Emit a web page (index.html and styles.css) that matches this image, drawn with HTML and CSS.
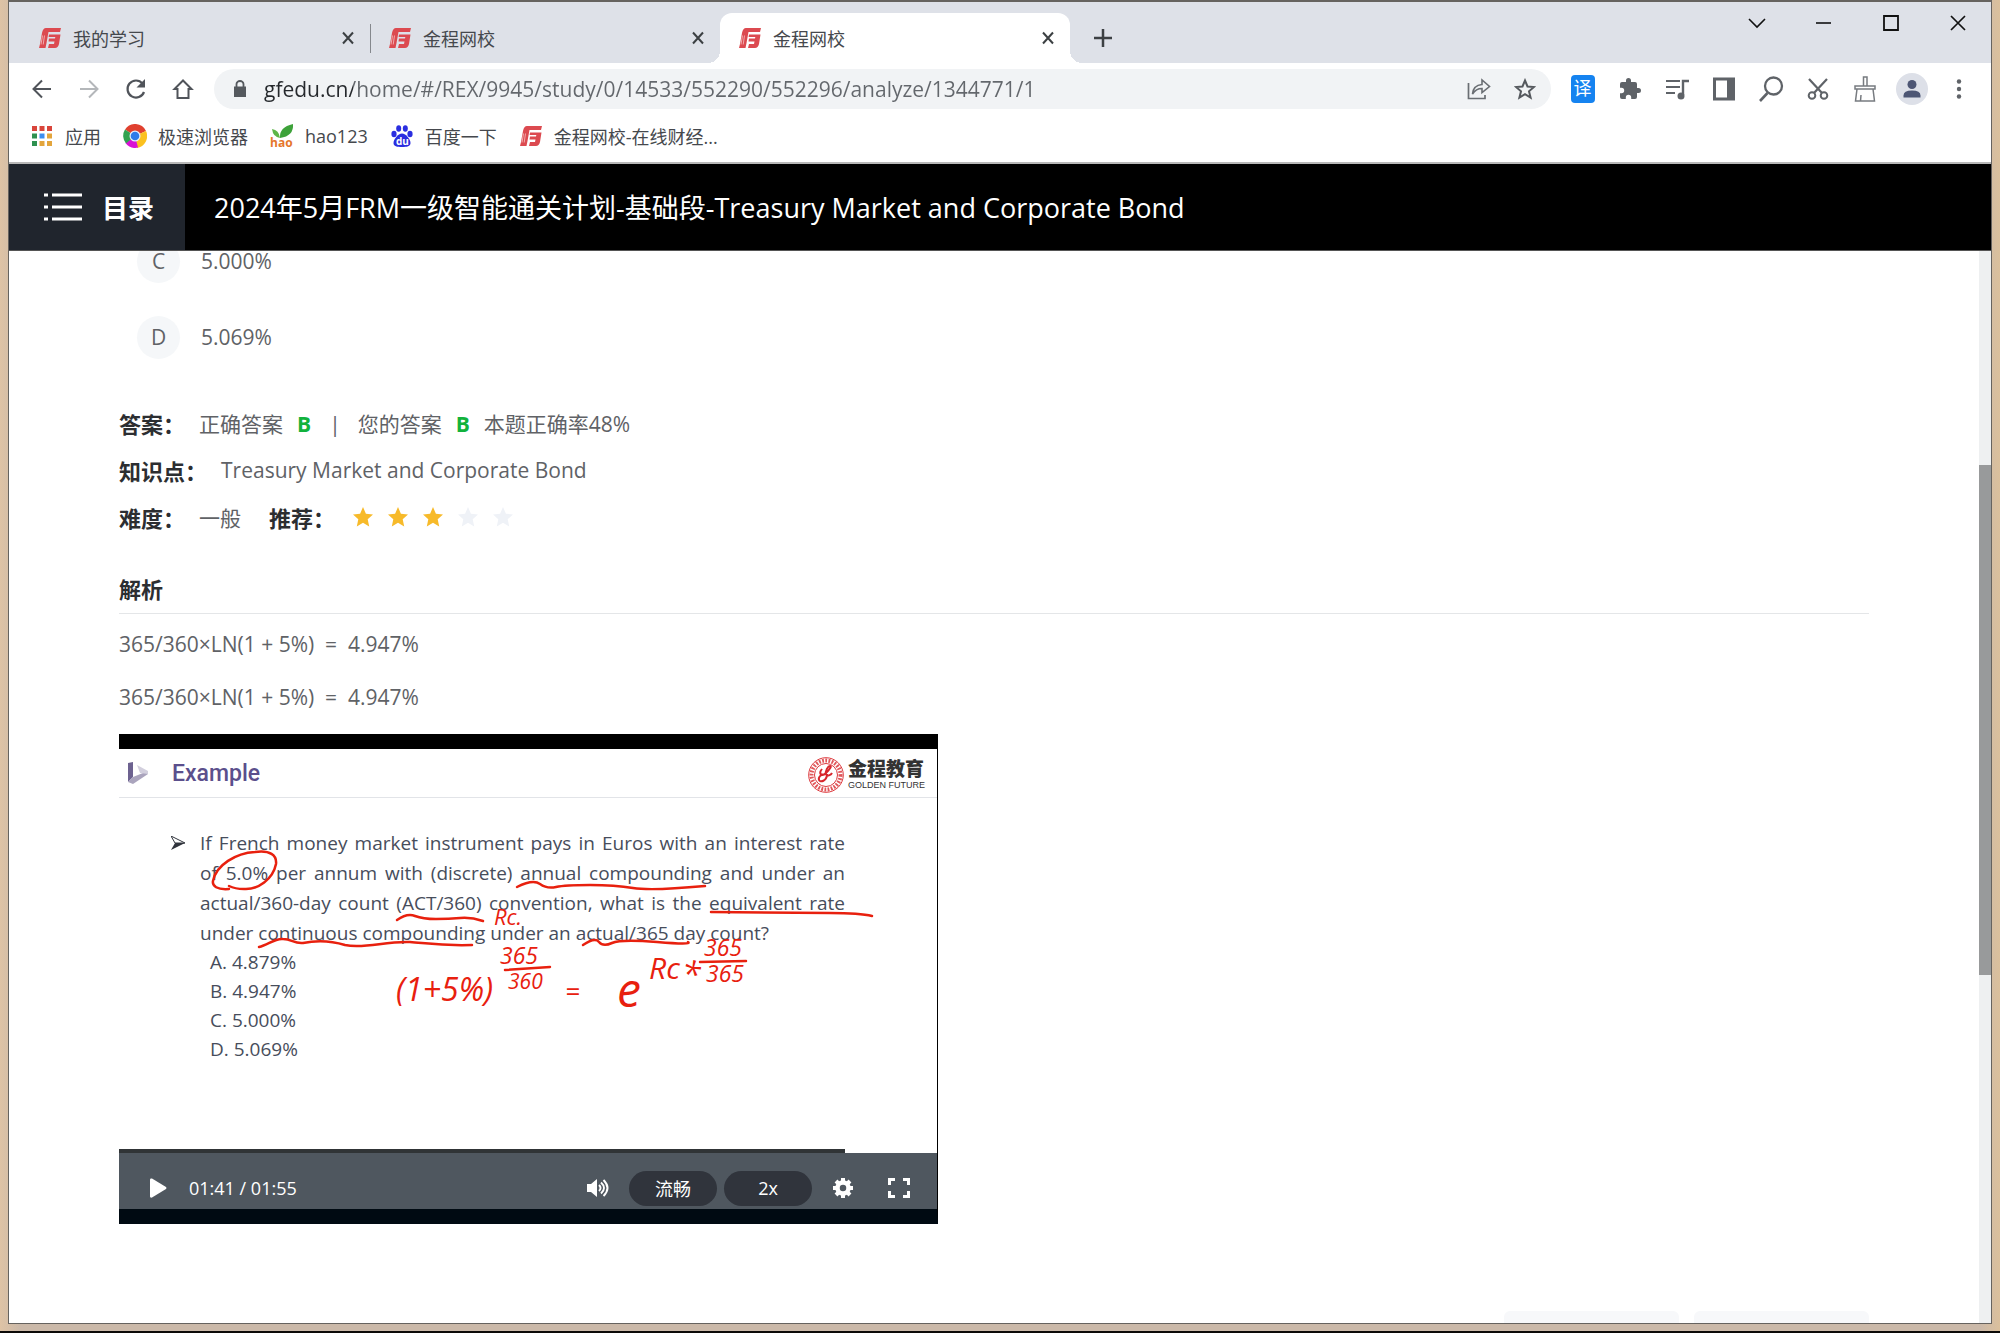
FILE: index.html
```html
<!DOCTYPE html>
<html lang="zh-CN">
<head>
<meta charset="utf-8">
<title>金程网校</title>
<link rel="stylesheet" href="styles.css">
</head>
<body>
<svg class="defs" aria-hidden="true">
  <symbol id="logo" viewBox="0 0 22 20">
    <path d="M7 0h15l-1 4H9.500L7.500 15 6.500 20H0l1-4 2-11Q4 0 7 0z" fill="#dc4a50"/>
    <path d="M10 6.500h11.500L20 16q-1 4-4 4H9l1-4h5l.5-2.500H9.500l.5-3h6l.3-1.500H9.600z" fill="#dc4a50"/>
    <path d="M3.500 7.500 2 16.500M5.500 7.500 4.200 16.500" stroke="#f1aaab" stroke-width="1"/>
  </symbol>
  <symbol id="star" viewBox="0 0 20 20">
    <path d="M10 0l2.900 6.700 7.100.7-5.300 4.800 1.500 7.200L10 15.700l-6.200 3.700 1.500-7.200L0 7.400l7.100-.7z" fill="currentColor"/>
  </symbol>
  <symbol id="close" viewBox="0 0 14 14">
    <path d="M2 1.500l10 11M12 1.500l-10 11" stroke="currentColor" stroke-width="2" fill="none"/>
  </symbol>
</svg>

<div class="window">
  <header class="tabstrip">
    <nav class="tabs" aria-label="标签页">
      <div class="tab">
        <svg class="favicon"><use href="#logo"/></svg><span class="tab-title">我的学习</span>
        <button class="tab-close" aria-label="关闭"><svg><use href="#close"/></svg></button>
      </div>
      <div class="tab tab-divided">
        <svg class="favicon"><use href="#logo"/></svg><span class="tab-title">金程网校</span>
        <button class="tab-close" aria-label="关闭"><svg><use href="#close"/></svg></button>
      </div>
      <div class="tab tab-active">
        <svg class="favicon"><use href="#logo"/></svg><span class="tab-title">金程网校</span>
        <button class="tab-close" aria-label="关闭"><svg><use href="#close"/></svg></button>
      </div>
      <button class="new-tab" aria-label="新标签页"><svg width="18" height="18" viewBox="0 0 18 18"><path d="M9 0v18M0 9h18" stroke="#3c4043" stroke-width="2.500"/></svg></button>
    </nav>
    <div class="window-controls">
      <button aria-label="搜索标签页"><svg width="18" height="18" viewBox="0 0 18 18"><path d="M1 5l8 8 8-8" fill="none" stroke="#111" stroke-width="1.600"/></svg></button>
      <button aria-label="最小化"><svg width="18" height="18" viewBox="0 0 18 18"><path d="M1 9h15" stroke="#111" stroke-width="1.600"/></svg></button>
      <button aria-label="最大化"><svg width="18" height="18" viewBox="0 0 18 18"><path d="M2 2h14v14H2z" fill="none" stroke="#111" stroke-width="1.800"/></svg></button>
      <button aria-label="关闭窗口"><svg width="18" height="18" viewBox="0 0 18 18"><path d="M2 2l14 14M16 2L2 16" stroke="#111" stroke-width="1.700"/></svg></button>
    </div>
  </header>

  <div class="toolbar">
    <div class="nav-buttons">
      <button aria-label="后退"><svg width="22" height="22" viewBox="0 0 22 22"><path d="M20 11H3M11 2.500L2.500 11l8.500 8.500" fill="none" stroke="#50545a" stroke-width="2"/></svg></button>
      <button aria-label="前进"><svg width="22" height="22" viewBox="0 0 22 22"><path d="M2 11h17M11 2.500l8.500 8.500-8.500 8.500" fill="none" stroke="#b4b7ba" stroke-width="2"/></svg></button>
      <button aria-label="重新加载"><svg width="22" height="22" viewBox="0 0 22 22"><path d="M19 14a8.500 8.500 0 1 1-1.500-8.500" fill="none" stroke="#50545a" stroke-width="2.200"/><path d="M20 1v8.500h-8.500z" fill="#50545a"/></svg></button>
      <button aria-label="主页"><svg width="22" height="22" viewBox="0 0 22 22"><path d="M11 2.500L2.500 11H5.500v9h11v-9h3z" fill="none" stroke="#50545a" stroke-width="2"/></svg></button>
    </div>
    <div class="address">
      <svg class="lock" width="14" height="18" viewBox="0 0 14 18"><path d="M1 6.500h12V17H1z" fill="#55595e"/><path d="M3.500 7V4a3.500 3 0 0 1 7 0v3" fill="none" stroke="#55595e" stroke-width="1.800"/></svg>
      <input class="url" type="text" aria-label="地址" value="gfedu.cn/home/#/REX/9945/study/0/14533/552290/552296/analyze/1344771/1">
      <button aria-label="分享"><svg width="24" height="22" viewBox="0 0 24 22"><path d="M1.500 5v15.500H18V17" fill="none" stroke="#6a6e73" stroke-width="1.700"/><path d="M5.500 16C6 9.500 10 7 15 6.500V2l7.500 6.500L15 14.500V10.500C10.500 10.500 8 12 5.500 16z" fill="none" stroke="#6a6e73" stroke-width="1.600"/></svg></button>
      <button aria-label="收藏"><svg width="22" height="22" viewBox="0 0 22 22"><path d="M11 2.500l2.500 6 6.500.5-5 4.300 1.600 6.400-5.600-3.500-5.600 3.500L7 13.300 2 9l6.500-.5z" fill="none" stroke="#55595e" stroke-width="2"/></svg></button>
    </div>
    <div class="extensions">
      <button aria-label="翻译"><span class="translate">译</span></button>
      <button aria-label="扩展程序"><svg width="24" height="24" viewBox="0 0 24 24"><path d="M20.500 11H19V7a2 2 0 0 0-2-2h-4V3.500a2.500 2.500 0 0 0-5 0V5H4a2 2 0 0 0-2 2v3.800h1.500a2.700 2.700 0 0 1 0 5.400H2V20a2 2 0 0 0 2 2h3.800v-1.500a2.700 2.700 0 0 1 5.400 0V22H17a2 2 0 0 0 2-2v-4h1.500a2.500 2.500 0 0 0 0-5z" fill="#5f6368"/></svg></button>
      <button aria-label="媒体"><svg width="24" height="24" viewBox="0 0 24 24"><path d="M1 4h14M1 10h14M1 16h9" stroke="#5f6368" stroke-width="2.200"/><path d="M18 18V4h6" fill="none" stroke="#5f6368" stroke-width="2.400"/><circle cx="16" cy="19" r="3.500" fill="#5f6368"/></svg></button>
      <button aria-label="侧边栏"><svg width="22" height="24" viewBox="0 0 22 24"><path d="M1.500 2h19v20h-19z" fill="none" stroke="#5f6368" stroke-width="3"/><path d="M14 2h7v20h-7z" fill="#5f6368"/></svg></button>
      <button aria-label="搜索"><svg width="26" height="26" viewBox="0 0 26 26"><circle cx="15.500" cy="10" r="8.500" fill="none" stroke="#5f6368" stroke-width="2.300"/><path d="M9.500 17L2 25" stroke="#5f6368" stroke-width="2.600"/></svg></button>
      <button aria-label="截图"><svg width="22" height="24" viewBox="0 0 22 24"><path d="M2 2l13 14M20 2L7 16" stroke="#5f6368" stroke-width="2.200"/><circle cx="5" cy="18.500" r="3.300" fill="none" stroke="#5f6368" stroke-width="2"/><circle cx="17" cy="18.500" r="3.300" fill="none" stroke="#5f6368" stroke-width="2"/></svg></button>
      <button aria-label="清理"><svg width="24" height="26" viewBox="0 0 24 26"><path d="M10.500 10V1h3.500v9M2 10h20v3H2zM4 13L2.500 25h19L20 13M8 19l-.5 6" fill="none" stroke="#777b80" stroke-width="1.500"/></svg></button>
      <button aria-label="用户"><svg width="32" height="32" viewBox="0 0 32 32"><circle cx="16" cy="16" r="16" fill="#dde0e8"/><circle cx="16" cy="11.500" r="4.500" fill="#4d5674"/><path d="M7.500 24.500v-2q0-5 8.500-5t8.500 5v2z" fill="#4d5674"/></svg></button>
      <button aria-label="菜单"><svg width="6" height="20" viewBox="0 0 6 20"><circle cx="3" cy="2.500" r="2.200" fill="#5f6368"/><circle cx="3" cy="10" r="2.200" fill="#5f6368"/><circle cx="3" cy="17.500" r="2.200" fill="#5f6368"/></svg></button>
    </div>
  </div>

  <nav class="bookmarks" aria-label="书签">
    <a href="#"><svg viewBox="0 0 24 24"><path d="M2 2h5v5H2z" fill="#d9453b"/><path d="M9.500 2h5v5h-5z" fill="#d9453b"/><path d="M17 2h5v5h-5z" fill="#d9453b"/><path d="M2 9.500h5v5H2z" fill="#2f9150"/><path d="M9.500 9.500h5v5h-5z" fill="#3c8df0"/><path d="M17 9.500h5v5h-5z" fill="#e3a53c"/><path d="M2 17h5v5H2z" fill="#2f9150"/><path d="M9.500 17h5v5h-5z" fill="#e3a53c"/><path d="M17 17h5v5h-5z" fill="#e3a53c"/></svg>应用</a>
    <a href="#"><svg viewBox="0 0 24 24"><path d="M12 12L2 5.500A12 12 0 0 1 23 7z" fill="#e0402f"/><path d="M12 12l11-5a12 12 0 0 1-9 17z" fill="#fbc11f"/><path d="M12 12l3 11.600A12 12 0 0 1 2.500 19z" fill="#d911d6"/><path d="M12 12l-9 7.500A12 12 0 0 1 2 5.500z" fill="#32a350"/><circle cx="12" cy="12" r="5.500" fill="#e6efff"/><circle cx="12" cy="12" r="4.300" fill="#2f7bea"/></svg>极速浏览器</a>
    <a href="#"><svg viewBox="0 0 24 24"><path d="M10 14Q9 3 23 0q1 12-13 14z" fill="#3da23a"/><path d="M10 14Q9 6 2 5q1 8 8 9z" fill="#5cb548"/><text x="0" y="23" class="hao">hao</text></svg>hao123</a>
    <a href="#"><svg viewBox="0 0 24 24"><g fill="#2a2ee0"><ellipse cx="4" cy="10" rx="2.600" ry="3.300"/><ellipse cx="8.700" cy="4.500" rx="2.500" ry="3.300"/><ellipse cx="15.300" cy="4.500" rx="2.500" ry="3.300"/><ellipse cx="20" cy="10" rx="2.600" ry="3.300"/><path d="M12 9.500c4 0 8.500 6 8.500 9.500S17 23 12 23s-8.500-.5-8.500-4S8 9.500 12 9.500z"/></g><text x="6" y="21" class="du">du</text></svg>百度一下</a>
    <a href="#"><svg viewBox="-1 -2 24 24"><use href="#logo" width="22" height="20"/></svg>金程网校-在线财经...</a>
  </nav>

  <div class="course-bar">
    <button class="catalog"><svg width="38" height="30" viewBox="0 0 38 30"><path d="M0 3h4M0 15h4M0 27h4M8 3h30M8 15h30M8 27h30" stroke="#fff" stroke-width="3"/></svg>目录</button>
    <h1>2024年5月FRM一级智能通关计划-基础段-Treasury Market and Corporate Bond</h1>
  </div>

  <div class="viewport">
    <main class="page">
      <ul class="options">
        <li><span class="letter">C</span>5.000%</li>
        <li><span class="letter">D</span>5.069%</li>
      </ul>
      <dl class="facts">
        <div><dt>答案：</dt><dd>正确答案<b>B</b><i class="bar">|</i>您的答案<b>B</b>本题正确率48%</dd></div>
        <div><dt>知识点：</dt><dd>Treasury Market and Corporate Bond</dd></div>
        <div><dt>难度：</dt><dd>一般</dd><dt>推荐：</dt>
          <dd class="stars" aria-label="3 / 5"><svg><use href="#star"/></svg><svg><use href="#star"/></svg><svg><use href="#star"/></svg><svg class="off"><use href="#star"/></svg><svg class="off"><use href="#star"/></svg></dd></div>
      </dl>
      <h2>解析</h2>
      <p class="formula">365/360×LN(1 + 5%)&nbsp; =&nbsp; 4.947%</p>
      <p class="formula">365/360×LN(1 + 5%)&nbsp; =&nbsp; 4.947%</p>

      <section class="player" aria-label="视频解析">
        <div class="slide">
          <div class="slide-head">
            <svg width="20" height="22" viewBox="0 0 20 22"><path d="M0 1l5-1v15l-5 5z" fill="#6d6290"/><path d="M0 20l5-5 5-2 10-4v3L5 22z" fill="#aaa4bd"/><path d="M9 3l11 6v3l-8-1z" fill="#d2cfdd"/></svg>
            <h3>Example</h3>
            <div class="brand">
              <svg width="36" height="36" viewBox="0 0 36 36"><circle cx="18" cy="18" r="14.500" fill="none" stroke="#e0575a" stroke-width="4" stroke-dasharray="1.800 1.400"/><circle cx="18" cy="18" r="17.300" fill="none" stroke="#dd3a3e" stroke-width="1"/><circle cx="18" cy="18" r="11.500" fill="#fff" stroke="#dd3a3e" stroke-width="1"/><path d="M14 12c-4 5 0 8 4 4s6-7 4-7-5 5-4 8 5 1 6-1M18 17c-5 0-8 3-7 6s8 1 8-6" fill="none" stroke="#d7262c" stroke-width="2"/></svg>
              <div class="brand-name"><strong>金程教育</strong><small>GOLDEN FUTURE</small></div>
            </div>
          </div>
          <div class="question">
            <svg class="bullet" width="14" height="14" viewBox="0 0 14 14"><path d="M0 0l14 7H4z" fill="none" stroke="#30343c" stroke-width="1"/><path d="M4 7h10L0 14z" fill="#30343c"/></svg>
            <div class="question-text">
              <p>If French money market instrument pays in Euros with an interest rate</p>
              <p>of 5.0% per annum with (discrete) annual compounding and under an</p>
              <p>actual/360-day count (ACT/360) convention, what is the equivalent rate</p>
              <p class="last">under continuous compounding under an actual/365 day count?</p>
              <ul><li>A. 4.879%</li><li>B. 4.947%</li><li>C. 5.000%</li><li>D. 5.069%</li></ul>
            </div>
          </div>
          <svg class="ink" viewBox="119 750 818 400">
            <g fill="none" stroke="#e8200e" stroke-width="2.500" stroke-linecap="round">
              <path d="M229 890C217 891 212 887 213 882C216 866 236 854 255 853C270 851 277 856 276 865C273 880 258 891 244 890Q235 890 229 887"/>
              <path d="M517 888Q533 880 540 885T556 888T590 886T633 889T705 887"/>
              <path d="M711 913Q800 914 830 914T872 917"/>
              <path d="M397 921Q407 914 415 917T436 920T460 919T483 922"/>
              <path d="M259 948C268 946 275 939 283 940C292 940 294 945 303 944C317 941 332 942 345 946C365 950 385 942 410 943C425 944 440 947 472 946"/>
              <path d="M583 946Q595 938 599 943T612 944T657 943T688 943"/>
              <path d="M505 971L550 968M700 963L746 962"/>
            </g>
            <g class="ink-text">
              <text x="494" y="926" font-size="22">Rc.</text>
              <text x="500" y="965" font-size="23">365</text>
              <text x="508" y="990" font-size="21">360</text>
              <text x="396" y="1002" font-size="32">(1+5%)</text>
              <text x="565" y="1002" font-size="26">=</text>
              <text x="617" y="1008" font-size="48">e</text>
              <text x="649" y="980" font-size="30">Rc</text>
              <text x="682" y="988" font-size="34">*</text>
              <text x="704" y="957" font-size="23">365</text>
              <text x="706" y="983" font-size="23">365</text>
            </g>
          </svg>
        </div>
        <input class="progress" type="range" min="0" max="115" value="101" aria-label="播放进度">
        <div class="controls">
          <button aria-label="播放"><svg width="17" height="20" viewBox="0 0 17 20"><path d="M0 1.500Q0 0 2 .5L16 9q1 1 0 2L2 19.500q-2 .5-2-1z" fill="#fff"/></svg></button>
          <span class="time">01:41 / 01:55</span>
          <button class="volume" aria-label="音量"><svg width="22" height="18" viewBox="0 0 22 18"><path d="M0 5h4l6-5v18l-6-5H0z" fill="#fff"/><path d="M12 6q3 3 0 6M14 3.500q6 5.500 0 11M16.500 1q8 8 0 16" fill="none" stroke="#fff" stroke-width="1.900"/></svg></button>
          <button class="pill">流畅</button>
          <button class="pill">2x</button>
          <button class="gear" aria-label="设置"><svg width="20" height="20" viewBox="0 0 20 20"><circle cx="10" cy="10" r="5.500" fill="none" stroke="#fff" stroke-width="4.500"/><path d="M10 0v4M10 16v4M0 10h4M16 10h4M3 3l3 3M14 14l3 3M3 17l3-3M14 6l3-3" stroke="#fff" stroke-width="4"/></svg></button>
          <button class="full" aria-label="全屏"><svg width="22" height="20" viewBox="0 0 22 20"><path d="M1.500 7V1.500H7M15 1.500h5.500V7M20.500 13v5.500H15M7 18.500H1.500V13" fill="none" stroke="#fff" stroke-width="3"/></svg></button>
        </div>
      </section>
      <div class="pager"><button aria-label="上一题"></button><button aria-label="下一题"></button></div>
    </main>
    <div class="scrollbar"><div class="thumb"></div></div>
  </div>
</div>
</body>
</html>
```

FILE: styles.css
```css
* { box-sizing: border-box; }

body {
  margin: 0;
  height: 100vh;
  display: flex;
  flex-direction: column;
  padding: 0 8px 7px;
  border-bottom: 2px solid #0c0a08;
  background: linear-gradient(to right, #dec3a5, #cbb9a9 1%, #cbb9a9 99%, #dbc09c);
  font-family: "Open Sans", "Noto Sans CJK SC", sans-serif;
  color: #606266;
}

ul, dl, dd, p, h1, h2, h3 { margin: 0; padding: 0; }
ul { list-style: none; }
button { border: 0; padding: 0; background: none; font: inherit; color: inherit; display: flex; align-items: center; justify-content: center; }
svg { display: block; flex: none; }
.defs { position: absolute; width: 0; height: 0; }

.window { flex: 1; min-height: 0; display: flex; flex-direction: column; border: 1px solid #66635f; border-top-width: 2px; background: #fff; }

/* tab strip */
.tabstrip { display: flex; justify-content: space-between; height: 61px; background: #dee1e8; flex: none; }
.tabs { display: flex; padding: 11px 0 0 11px; }
.tab { width: 350px; display: flex; align-items: center; gap: 12px; padding: 0 14px 0 19px; color: #45484d; font-size: 18px; position: relative; }
.tab-title { flex: 1; }
.tab-divided::before { content: ""; position: absolute; left: 0; top: 11px; height: 29px; width: 1px; background: #85888d; }
.tab-active { background: #fff; border-radius: 12px 12px 0 0; }
.tab-active::before, .tab-active::after { content: ""; position: absolute; bottom: 0; width: 12px; height: 12px; }
.tab-active::before { left: -12px; background: radial-gradient(circle at 0 0, transparent 12px, #fff 12px); }
.tab-active::after { right: -12px; background: radial-gradient(circle at 100% 0, transparent 12px, #fff 12px); }
.favicon { width: 22px; height: 20px; }
.tab-close { width: 16px; height: 24px; color: #3c4043; }
.tab-close svg { width: 14px; height: 14px; }
.new-tab { width: 66px; }
.window-controls { display: flex; }
.window-controls button { width: 67px; height: 42px; }

/* toolbar */
.toolbar { display: flex; align-items: center; height: 52px; padding: 0 9px; gap: 8px; flex: none; }
.nav-buttons, .extensions { display: flex; }
.nav-buttons button, .extensions button { width: 47px; height: 40px; }
.address { flex: 1; display: flex; align-items: center; height: 40px; border-radius: 20px; background: #f1f3f5; padding: 0 3px 0 19px; }
.address button { width: 46px; height: 40px; }
.lock { margin: 0 17px 0 0; }
.url { flex: 1; border: 0; padding: 0; outline: 0; height: 38px; font: 21px/38px "Open Sans", sans-serif; color: transparent; background: linear-gradient(to right, #25282c 89px, #63676c 89px); -webkit-background-clip: text; background-clip: text; }
.translate { width: 24px; height: 28px; border-radius: 4px; background: #1583f0; color: #fff; font-size: 18px; line-height: 27px; text-align: center; }

/* bookmarks */
.bookmarks { display: flex; align-items: center; gap: 22px; height: 49px; padding: 0 21px 6px; border-bottom: 2px solid #b8b8b8; flex: none; }
.bookmarks a { display: flex; align-items: center; gap: 11px; color: #45484d; text-decoration: none; font-size: 18px; white-space: nowrap; }
.bookmarks svg { width: 24px; height: 24px; }
.hao { font: bold 12px "Open Sans", sans-serif; fill: #e5762b; }
.du { font: bold 10px "Open Sans", sans-serif; fill: #fff; }

/* course title */
.course-bar { display: flex; height: 87px; background: #000; border-bottom: 1px solid #555; color: #fff; flex: none; }
.catalog { width: 176px; padding-left: 4px; gap: 20px; background: #20252d; font-size: 26px; font-weight: 700; }
.course-bar h1 { padding-left: 29px; font-size: 27px; line-height: 88px; font-weight: 400; white-space: nowrap; }

/* page */
.viewport { flex: 1; min-height: 0; display: flex; overflow: hidden; }
.page { flex: 1; padding: 0 110px; display: flex; flex-direction: column; }
.options { margin: -28px 0 24px 18px; font-size: 21px; }
.options li { display: flex; align-items: center; gap: 21px; height: 76px; }
.letter { width: 43px; height: 43px; border-radius: 50%; background: #f5f7f9; line-height: 43px; text-align: center; }
.facts { font-size: 21px; }
.facts div { display: flex; align-items: center; height: 47px; }
.facts dt { font-size: 22px; font-weight: 700; color: #2c2e31; margin-right: 14px; }
.facts dd { margin-right: 28px; }
.facts b { color: #12b23c; margin: 0 14px; }
.bar { font-style: normal; margin: 0 17px 0 4px; }
.facts .stars { display: flex; gap: 15px; margin-left: 4px; color: #f7ba2a; }
.stars svg { width: 20px; height: 20px; }
.stars .off { color: #eff2f7; }
.page h2 { margin: 25px 0 4px; height: 50px; line-height: 48px; border-bottom: 1px solid #e4e6e8; font-size: 22px; color: #2c2e31; }
.formula { font-size: 21px; line-height: 53px; }

/* video player */
.player { width: 819px; margin-top: 10px; border: solid #000; border-width: 15px 1px 15px 0; border-bottom-color: #000a12; background: #fff; }
.slide { position: relative; height: 400px; }
.slide-head { display: flex; align-items: center; height: 49px; padding: 0 12px 0 9px; border-bottom: 1px solid #e2e4e8; }
.slide-head h3 { flex: 1; margin-left: 24px; font: 500 23px Roboto, sans-serif; color: #5b4f8c; }
.brand { display: flex; align-items: center; gap: 4px; padding-top: 3px; }
.brand-name { display: flex; flex-direction: column; color: #333; }
.brand-name strong { font-size: 19px; line-height: 21px; font-weight: 900; }
.brand-name small { font: 9px/10px "Liberation Sans", sans-serif; }
.question { display: flex; gap: 15px; padding: 30px 92px 0 52px; color: #474d5b; font-size: 19px; line-height: 30px; }
.bullet { margin-top: 8px; }
.question-text { flex: 1; }
.question p { text-align-last: justify; white-space: nowrap; }
.question .last { text-align-last: left; }
.question ul { padding-left: 10px; line-height: 29px; }
.ink { position: absolute; inset: 0; width: 818px; height: 400px; }
.ink-text { fill: #e8200e; font-family: "Open Sans", sans-serif; font-style: italic; }
.progress { appearance: none; display: block; width: 100%; height: 4px; margin: 0; background: linear-gradient(to right, #303436 726px, #fff 726px); }
.progress::-webkit-slider-thumb { appearance: none; width: 1px; height: 4px; background: transparent; }
.controls { display: flex; align-items: center; height: 56px; padding: 14px 27px 0 31px; background: #4f575f; color: #fff; font-size: 18px; }
.controls .time { flex: 1; margin-left: 22px; }
.pill { width: 88px; height: 35px; border-radius: 18px; background: #30343c; margin-right: 7px; }
.volume { margin-right: 20px; }
.gear { margin: 0 35px 0 14px; }

.pager { display: flex; justify-content: flex-end; gap: 15px; margin-top: 87px; }
.pager button { width: 175px; height: 48px; border-radius: 6px; background: #f7f8fa; flex: none; }

.scrollbar { width: 12px; background: #eef0f1; padding-top: 214px; }
.thumb { height: 510px; background: #989a9b; }
```
